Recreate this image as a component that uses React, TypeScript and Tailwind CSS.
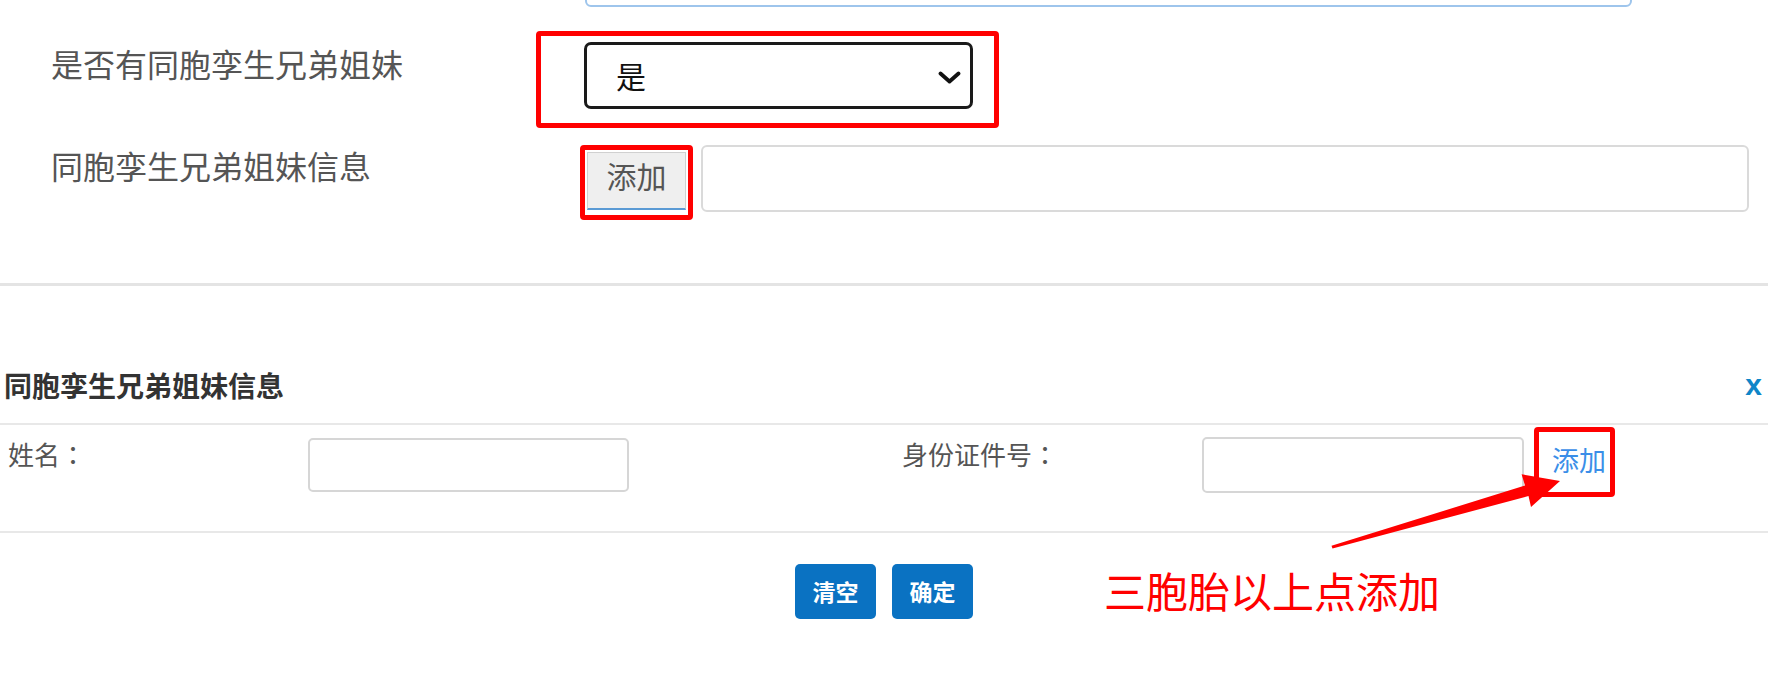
export default function App() {
  return (
    <div className="relative h-[690px] w-[1768px] overflow-hidden bg-white font-['Noto_Sans_CJK_SC','Liberation_Sans',sans-serif]">
      {/* field above, cut off by the top of the window */}
      <div className="-mt-[40px] ml-[585px] h-[47px] w-[1047px] rounded-md border-2 border-[#9ec5ec]" />

      {/* 是否有同胞孪生兄弟姐妹 */}
      <div className="mt-[24px] flex items-start">
        <div className="ml-[51px] w-[485px] pt-[16px] text-[32px] leading-[32px] text-[#555]">是否有同胞孪生兄弟姐妹</div>
        <div className="h-[97px] w-[463px] rounded-[4px] border-[5px] border-[#ff0000] pl-[43px] pt-[6px]">
          <div className="relative h-[67px] w-[389px]">
            <select
              defaultValue="是"
              className="h-full w-full appearance-none rounded-[7px] border-[3px] border-[#1a1a1a] bg-white pl-[29px] text-[30px] text-[#111] outline-none"
            >
              <option>是</option>
              <option>否</option>
            </select>
            <svg className="pointer-events-none absolute right-[12px] top-[29px]" width="23" height="13" viewBox="0 0 23 13">
              <polyline points="2.5,2.5 11.5,10.5 20.5,2.5" fill="none" stroke="#111" strokeWidth="3.8" strokeLinecap="round" strokeLinejoin="round" />
            </svg>
          </div>
        </div>
      </div>

      {/* 同胞孪生兄弟姐妹信息 */}
      <div className="mt-[17px] flex items-start">
        <div className="ml-[51px] w-[529px] pt-[4px] text-[32px] leading-[32px] text-[#555]">同胞孪生兄弟姐妹信息</div>
        <div className="h-[75px] w-[113px] rounded-[4px] border-[5px] border-[#ff0000] p-[2px] pb-[5px]">
          <button className="flex h-[58px] w-[99px] items-center justify-center border border-b-2 border-[#d0d0d0] border-b-[#5b9bd5] bg-[#efefef] pb-[12px] text-[30px] leading-[30px] text-[#555]">
            添加
          </button>
        </div>
        <div className="ml-[8px] h-[67px] w-[1048px] rounded-[6px] border-2 border-[#dadada] bg-white" />
      </div>

      <div className="mt-[63px] h-[3px] w-full bg-[#e4e4e4]" />

      {/* dialog */}
      <div className="mt-[85px] flex items-center justify-between pl-[4px] pr-[6px]">
        <div className="text-[28px] font-bold leading-[28px] text-[#333]">同胞孪生兄弟姐妹信息</div>
        <div className="font-['Liberation_Sans',sans-serif] text-[30px] font-bold leading-[28px] text-[#0e86c8]">x</div>
      </div>
      <div className="mt-[24px] h-[2px] w-full bg-[#e8e8e8]" />

      <div className="flex h-[106px] items-start">
        <div className="ml-[8px] w-[300px] pt-[16px] text-[26px] leading-[26px] text-[#555]">
          姓名<span className="font-['Noto_Sans_CJK_TC',sans-serif]">：</span>
        </div>
        <div className="mt-[13px] h-[54px] w-[321px] rounded-[5px] border-2 border-[#d6d6d6]" />
        <div className="ml-[273px] w-[300px] pt-[16px] text-[26px] leading-[26px] text-[#555]">
          身份证件号<span className="font-['Noto_Sans_CJK_TC',sans-serif]">：</span>
        </div>
        <div className="mt-[12px] h-[56px] w-[322px] rounded-[5px] border-2 border-[#d6d6d6]" />
        <div className="ml-[10px] mt-[2px] h-[70px] w-[81px] rounded-[4px] border-[5px] border-[#ff0000] pl-[13px] pt-[14px]">
          <a className="text-[27px] leading-[27px] text-[#3a8ee8]">添加</a>
        </div>
      </div>
      <div className="h-[2px] w-full bg-[#e8e8e8]" />

      <div className="mt-[31px] flex justify-center gap-[16px]">
        <button className="h-[55px] w-[81px] rounded-[5px] bg-[#0a72c2] text-[23px] font-bold text-white">清空</button>
        <button className="h-[55px] w-[81px] rounded-[5px] bg-[#0a72c2] text-[23px] font-bold text-white">确定</button>
      </div>

      {/* annotation */}
      <div className="absolute left-[1104px] top-[569px] text-[42px] leading-[42px] text-[#ff0000]">三胞胎以上点添加</div>
      <svg className="pointer-events-none absolute left-0 top-0" width="1768" height="690">
        <polygon
          points="1331.5,545.8 1525,485.5 1521.6,474.3 1560,481 1531,507 1528.5,496 1332.5,548.6"
          fill="#ff0000"
        />
      </svg>
    </div>
  );
}
